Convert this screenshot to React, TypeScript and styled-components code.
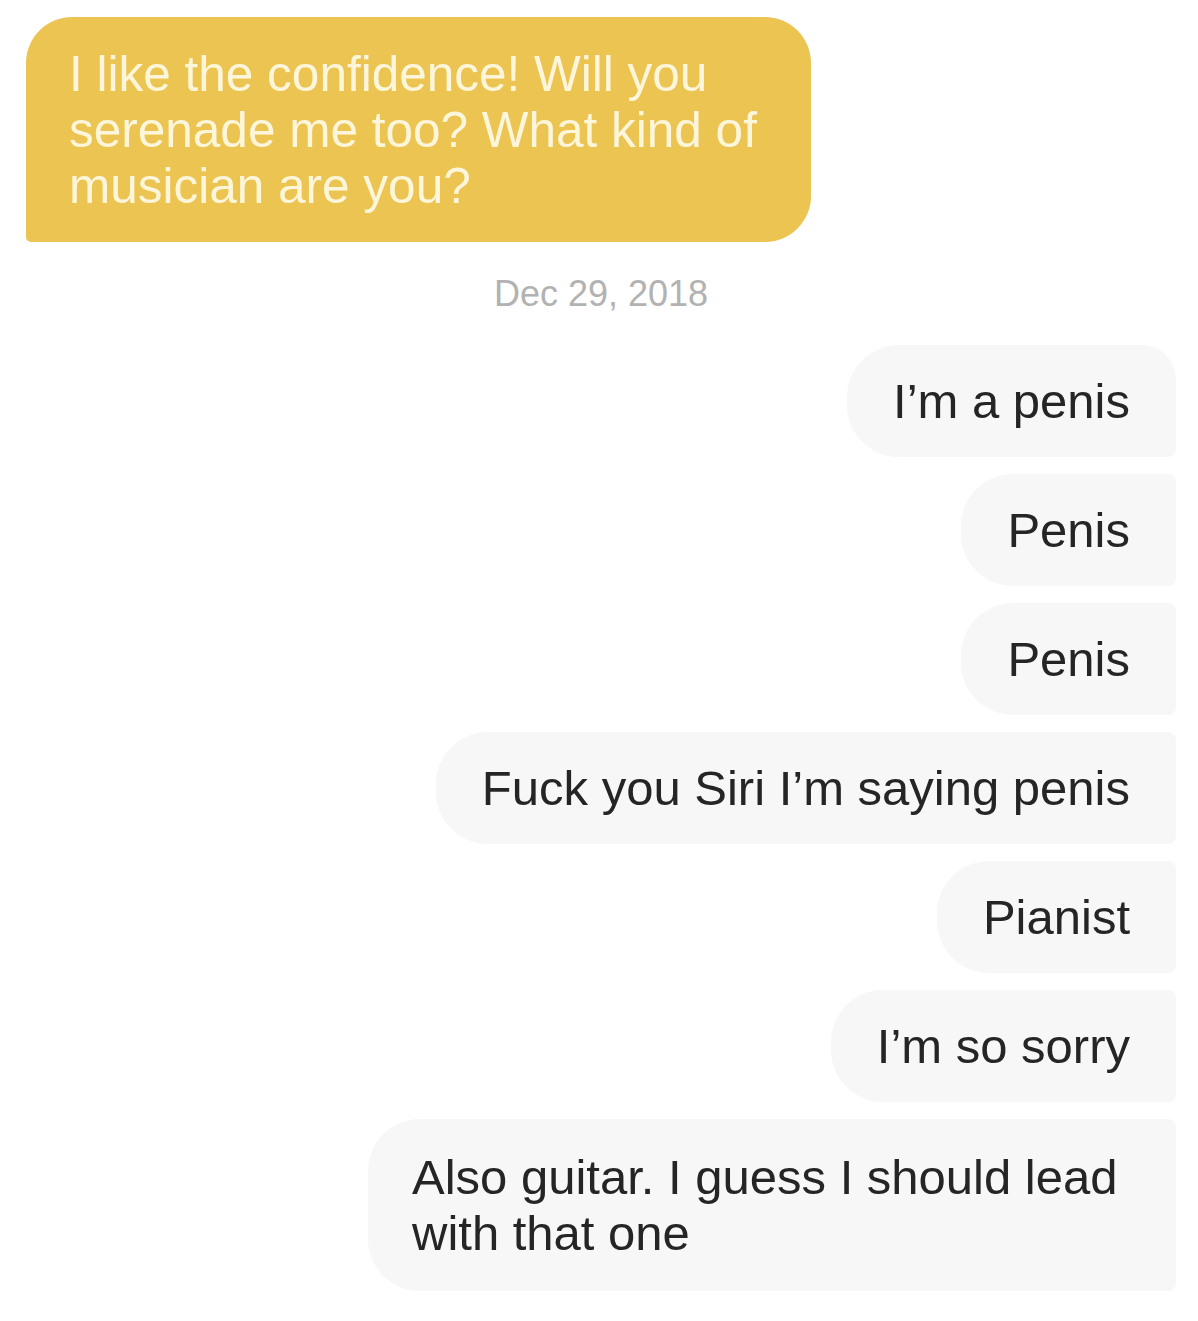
import React from "react";
import styled, { createGlobalStyle } from "styled-components";

const GlobalStyle = createGlobalStyle`
  html, body {
    margin: 0;
    padding: 0;
    background: #ffffff;
  }
  body {
    font-family: "Liberation Sans", Arial, sans-serif;
    -webkit-font-smoothing: antialiased;
  }
`;

const Thread = styled.div`
  display: flex;
  flex-direction: column;
  padding: 17px 22px 0 26px;
  height: 1321px;
  box-sizing: border-box;
  overflow: hidden;
`;

const IncomingBubble = styled.div`
  align-self: flex-start;
  width: 785px;
  box-sizing: border-box;
  background: #ecc452;
  color: #fdf6da;
  font-size: 49.5px;
  line-height: 56px;
  padding: 29px 30px 28px 43px;
  border-radius: 46px 46px 46px 5px;
  white-space: pre-line;
`;

const DateStamp = styled.div`
  text-align: center;
  color: #b2b2b2;
  font-size: 36px;
  line-height: 44px;
  margin: 30px 0 29px;
`;

const OutgoingGroup = styled.div`
  display: flex;
  flex-direction: column;
  align-items: flex-end;
  gap: 17px;
`;

const OutBubble = styled.div<{ $first?: boolean; $last?: boolean }>`
  max-width: 808px;
  box-sizing: border-box;
  background: #f7f7f7;
  color: #252525;
  font-size: 49px;
  line-height: 56px;
  padding: ${(p) => (p.$last ? "30px 46px 30px 44px" : "28px 46px")};
  border-radius: ${(p) =>
    `52px ${p.$first ? "34px" : "8px"} 8px 52px`};
`;

const Status = styled.div`
  align-self: flex-end;
  margin: 12px 4px 0 0;
  color: #b2b2b2;
  font-size: 36px;
  line-height: 44px;
`;

const outgoing = [
  "I’m a penis",
  "Penis",
  "Penis",
  "Fuck you Siri I’m saying penis",
  "Pianist",
  "I’m so sorry",
  "Also guitar. I guess I should lead with that one",
];

export default function App() {
  return (
    <>
      <GlobalStyle />
      <Thread>
        <IncomingBubble>
          {"I like the confidence! Will you\nserenade me too? What kind of\nmusician are you?"}
        </IncomingBubble>
        <DateStamp>Dec 29, 2018</DateStamp>
        <OutgoingGroup>
          {outgoing.map((m, i) => (
            <OutBubble
              key={i}
              $first={i === 0}
              $last={i === outgoing.length - 1}
            >
              {m}
            </OutBubble>
          ))}
          <Status>Delivered</Status>
        </OutgoingGroup>
      </Thread>
    </>
  );
}
